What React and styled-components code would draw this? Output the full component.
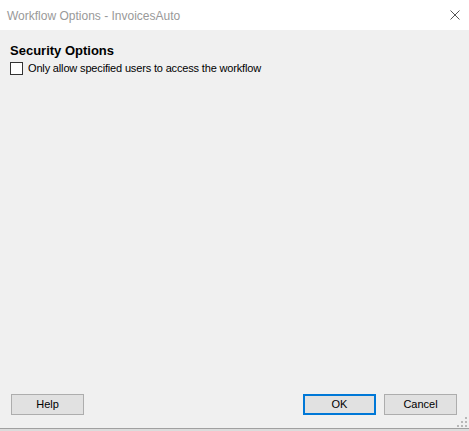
import React from "react";
import styled, { createGlobalStyle } from "styled-components";

const Global = createGlobalStyle`
  html, body { margin: 0; padding: 0; height: 100%; background: #f0f0f0; }
  #root { height: 100%; }
`;

const Window = styled.div`
  position: relative;
  height: 431px;
  display: flex;
  flex-direction: column;
  background: #f0f0f0;
  font-family: "Liberation Sans", Arial, sans-serif;
  box-sizing: border-box;
`;

const TitleBar = styled.div`
  height: 30px;
  flex: 0 0 30px;
  background: #ffffff;
  display: flex;
  align-items: center;
  justify-content: space-between;
  padding: 0 9px 0 7px;
`;

const Title = styled.span`
  font-size: 12px;
  color: #999999;
  line-height: 16px;
  margin-top: 1px;
`;

const Content = styled.div`
  flex: 1;
  padding: 13px 10px 0 10px;
`;

const Heading = styled.div`
  font-size: 13px;
  font-weight: bold;
  line-height: 15px;
  color: #000;
`;

const CheckRow = styled.label`
  display: flex;
  align-items: center;
  gap: 5px;
  margin-top: 4px;
  font-size: 11px;
  letter-spacing: -0.16px;
  line-height: 13px;
  color: #000;
`;

const Box = styled.span`
  width: 13px;
  height: 13px;
  box-sizing: border-box;
  border: 1px solid #333333;
  background: #ffffff;
  flex: 0 0 13px;
`;

const Footer = styled.div`
  display: flex;
  align-items: center;
  padding: 0 12px 13px 11px;
`;

const Spacer = styled.div`
  flex: 1;
`;

const Button = styled.button`
  width: 73px;
  height: 21px;
  box-sizing: border-box;
  margin-left: ${(p) => (p.$gap ? "8px" : "0")};
  background: #e1e1e1;
  border: ${(p) => (p.$default ? "2px solid #0078d7" : "1px solid #adadad")};
  font-family: "Liberation Sans", Arial, sans-serif;
  font-size: 11px;
  color: #000;
  padding: 0;
  line-height: 1;
`;

const BottomEdge = styled.div`
  height: 3px;
  flex: 0 0 3px;
  border-top: 1px solid #a0a0a0;
  background: #dcdcdc;
  box-sizing: border-box;
`;

const Grip = styled.svg`
  position: absolute;
  right: 2px;
  bottom: 4px;
`;

const CloseIcon = () => (
  <svg width="10" height="10" viewBox="0 0 10 10">
    <path d="M0.5 0.5 L9.5 9.5 M9.5 0.5 L0.5 9.5" stroke="#555" strokeWidth="1" fill="none" />
  </svg>
);

export default function App() {
  return (
    <>
      <Global />
      <Window>
        <TitleBar>
          <Title>Workflow Options - InvoicesAuto</Title>
          <CloseIcon />
        </TitleBar>
        <Content>
          <Heading>Security Options</Heading>
          <CheckRow>
            <Box />
            <span>Only allow specified users to access the workflow</span>
          </CheckRow>
        </Content>
        <Footer>
          <Button>Help</Button>
          <Spacer />
          <Button $default>OK</Button>
          <Button $gap>Cancel</Button>
        </Footer>
        <BottomEdge />
        <Grip width="10" height="10" viewBox="0 0 10 10">
          <g fill="#b8b8b8">
            <rect x="8" y="0" width="2" height="2" />
            <rect x="4" y="4" width="2" height="2" />
            <rect x="8" y="4" width="2" height="2" />
            <rect x="0" y="8" width="2" height="2" />
            <rect x="4" y="8" width="2" height="2" />
            <rect x="8" y="8" width="2" height="2" />
          </g>
        </Grip>
      </Window>
    </>
  );
}
